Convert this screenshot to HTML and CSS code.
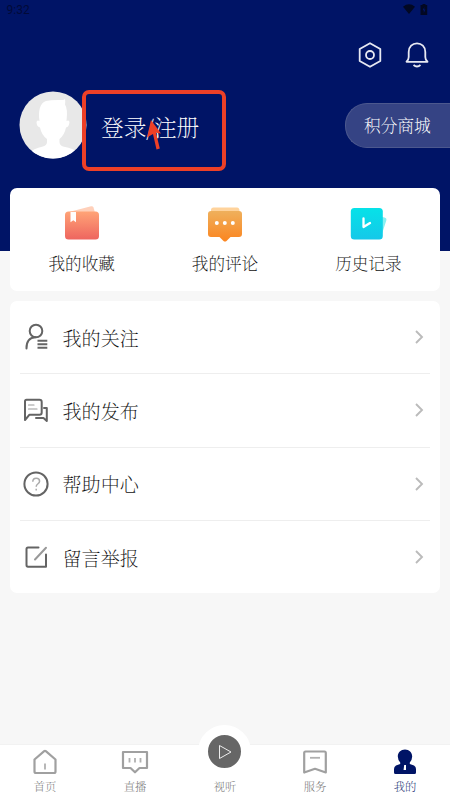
FILE: index.html
```html
<!DOCTYPE html>
<html lang="zh-CN">
<head>
<meta charset="utf-8">
<title>我的</title>
<link rel="stylesheet" href="styles.css">
</head>
<body>
<div class="screen">
  <header class="hero">
    <div class="status">
      <span>9:32</span>
      <div class="status-icons">
        <svg width="12" height="10" viewBox="0 0 12 10"><path d="M0 2.7Q6-2 12 2.7L6 10Z"/></svg>
        <svg width="8" height="11" viewBox="0 0 8 11"><path d="M2.5 0h3v1H7.2v10H.5V1h2Z"/><path d="M4.300 3 2.600 6.200h1.200V9L5.500 5.500H4.300Z" fill="#001466"/></svg>
      </div>
    </div>
    <div class="actions">
      <svg width="24" height="28" viewBox="0 0 24 28"><path d="M12 2.200 22.300 8v12L12 25.800 1.700 20V8Z"/><circle cx="12" cy="14" r="4"/></svg>
      <svg width="24" height="28" viewBox="0 0 24 28"><path d="M1.500 20.800H22.500C21 19.600 20.300 18 20.300 16V11C20.300 5.500 16.600 2.400 12 2.400S3.700 5.500 3.700 11V16C3.700 18 3 19.600 1.500 20.800Z"/><path d="M8.500 24Q12 27 15.500 24"/></svg>
    </div>
    <div class="account">
      <svg class="avatar" width="68" height="68" viewBox="0 0 68 68">
        <defs><clipPath id="face"><circle cx="34" cy="34" r="33.500"/></clipPath></defs>
        <circle cx="34" cy="34" r="33.500" fill="#e8e8e8"/>
        <path clip-path="url(#face)" fill="#fff" d="M20.500 30C19 20 21 12 27 10Q33 8.500 44 9Q46 8.500 46 7.500Q46.500 11 46 13.500Q49 18 47.500 30Q50 28.500 50.500 31Q50 36 47 36.500Q45.500 44 40.500 48V51Q40.500 54 44 55.500Q56 57.500 59 62V68H10V62Q14 57.500 24 55.500Q28 54 28 51V48Q22.500 44 21 36.500Q17.500 35.500 17.500 31Q18 28.500 20.500 30Z"/>
      </svg>
      <span class="login">登录/注册</span>
      <span class="mall">积分商城</span>
    </div>
  </header>

  <section class="card shortcuts">
    <div class="shortcut">
      <svg width="40" height="40" viewBox="0 0 40 40">
        <defs><linearGradient id="red" x2="0" y2="1"><stop stop-color="#ffa477"/><stop offset="1" stop-color="#ee655f"/></linearGradient></defs>
        <path d="M7 8 29 2.300Q31 2 31.500 3.500L34 12H7Z" fill="#ffd0ba"/>
        <rect x="3" y="7.500" width="34" height="28" rx="3.500" fill="url(#red)"/>
        <path d="M8.500 8H14V18.200L11.300 16.200 8.500 18.200Z" fill="#fff"/>
      </svg>
      <span>我的收藏</span>
    </div>
    <div class="shortcut">
      <svg width="40" height="40" viewBox="0 0 40 40">
        <defs><linearGradient id="orange" x2="0" y2="1"><stop stop-color="#efb05c"/><stop offset="1" stop-color="#fb8520"/></linearGradient></defs>
        <path d="M6 10V6Q6 3.500 8.500 3.500H32Q34.500 3.500 34.500 7V10Z" fill="#ffd39c"/>
        <path d="M3 10Q3 7 6 7H34Q37 7 37 10V30Q37 33 34 33H25.500L21.500 37Q20 38 18.500 37L14.500 33H6Q3 33 3 30Z" fill="url(#orange)"/>
        <g fill="#fff"><circle cx="11.800" cy="19" r="2"/><circle cx="19.800" cy="19" r="2"/><circle cx="27.800" cy="19" r="2"/></g>
      </svg>
      <span>我的评论</span>
    </div>
    <div class="shortcut">
      <svg width="40" height="40" viewBox="0 0 40 40">
        <defs><linearGradient id="cyan" x2="0" y2="1"><stop stop-color="#06e2e8"/><stop offset="1" stop-color="#15c8e9"/></linearGradient></defs>
        <path d="M30 12 36.500 13.500Q39 14 38.300 16.500L33 33Z" fill="#89f0f2"/>
        <rect x="2.800" y="4" width="32" height="31.500" rx="3.500" fill="url(#cyan)"/>
        <path d="M15.500 14.500V23L22 19" fill="none" stroke="#fff" stroke-width="2.300" stroke-linecap="round" stroke-linejoin="round"/>
      </svg>
      <span>历史记录</span>
    </div>
  </section>

  <section class="card menu">
    <div class="row">
      <svg class="glyph" width="26" height="28" viewBox="0 0 26 28"><circle cx="13" cy="8" r="6.300"/><path d="M3.500 25.500Q3.200 15 12.500 14.300"/><path class="lines" d="M14.500 17.800H24.300M14.500 21.300H24.300M14.500 24.800H24.300"/></svg>
      <span>我的关注</span>
      <svg class="chevron" width="10" height="14" viewBox="0 0 10 14"><path d="M2 1 8 7 2 13"/></svg>
    </div>
    <div class="row">
      <svg class="glyph" width="26" height="28" viewBox="0 0 26 28"><path d="M3.500 3.700H16.500Q18.700 3.700 18.700 5.900V16.500Q18.700 18.700 16.500 18.700H6.500L2 24V5.500Q2 3.700 3.500 3.700Z"/><path d="M21 12H23.800V25L20.500 22H13"/><path class="thin" d="M5.500 9H11M5.500 13H14"/></svg>
      <span>我的发布</span>
      <svg class="chevron" width="10" height="14" viewBox="0 0 10 14"><path d="M2 1 8 7 2 13"/></svg>
    </div>
    <div class="row">
      <svg class="glyph" width="26" height="28" viewBox="0 0 26 28"><circle cx="13" cy="14" r="11.600"/><path class="mark" d="M9.800 11.800Q9.800 8.300 13.200 8.300Q16.600 8.300 16.600 11.200Q16.600 12.500 14.700 14Q13.200 15 13.200 16.700M13.200 18.800V20.500"/></svg>
      <span>帮助中心</span>
      <svg class="chevron" width="10" height="14" viewBox="0 0 10 14"><path d="M2 1 8 7 2 13"/></svg>
    </div>
    <div class="row">
      <svg class="glyph" width="26" height="28" viewBox="0 0 26 28"><path d="M15.500 4.500H5Q3.500 4.500 3.500 6V22Q3.500 23.800 5 23.800H23V11.500"/><path class="pen" d="M23 4.800 12 16.500"/></svg>
      <span>留言举报</span>
      <svg class="chevron" width="10" height="14" viewBox="0 0 10 14"><path d="M2 1 8 7 2 13"/></svg>
    </div>
  </section>

  <nav class="tabs">
    <div class="tab">
      <svg width="28" height="28" viewBox="0 0 28 28"><path d="M3.500 11.500 13.200 3.200Q14 2.500 14.800 3.200L24.500 11.500V23.500Q24.500 25 23 25H5Q3.500 25 3.500 23.500Z"/><path class="fine" d="M14 15.500V21.500"/></svg>
      <span>首页</span>
    </div>
    <div class="tab">
      <svg width="28" height="28" viewBox="0 0 28 28"><path d="M2 4H26V20H18.500L14 24.300 9.500 20H2Z"/><path d="M8.500 10V14.500M14 10V14.500M19.500 10V14.500" class="fine"/></svg>
      <span>直播</span>
    </div>
    <div class="tab center">
      <div class="play"><svg width="16" height="16" viewBox="0 0 16 16"><path d="M2.500 1.500 14 8 2.500 14.500Z"/></svg></div>
      <span>视听</span>
    </div>
    <div class="tab">
      <svg width="28" height="28" viewBox="0 0 28 28"><path d="M4.500 3.500H23.500Q24.800 3.500 24.800 5V24.500L14 20.800 3.200 24.500V5Q3.200 3.500 4.500 3.500Z"/><path class="fine" d="M9 9.800H19"/></svg>
      <span>服务</span>
    </div>
    <div class="tab active">
      <svg width="28" height="28" viewBox="0 0 28 28"><path fill="#001466" stroke="none" d="M14 1.500C18.200 1.500 21.200 4.600 21.200 8.500Q21.200 11.500 18.800 14.500V16L23 17.500Q25 18.500 25 21V24.500Q25 26 23.500 26H4.500Q3 26 3 24.500V21Q3 18.500 5 17.500L9.200 16V14.500Q6.800 11.500 6.800 8.500C6.800 4.600 9.800 1.500 14 1.500Z"/><path fill="#fff" stroke="none" d="M13.200 17H15V22H12.600Z"/></svg>
      <span>我的</span>
    </div>
  </nav>

  <div class="highlight"></div>
  <svg class="pointer" width="16" height="32" viewBox="0 0 16 32"><path d="M5 1 15 14.500 10 13.800 13.800 29.500 10.500 30.500 7 15 1 18.500Z" fill="#ed4027"/></svg>
</div>
</body>
</html>
```

FILE: styles.css
```css
* { box-sizing: border-box; }

body {
  margin: 0;
  font-family: "Noto Serif CJK SC", "Noto Serif SC", "Noto Sans CJK SC", serif;
  font-weight: 200;
  color: #111;
}

svg { display: block; flex: none; }

.screen {
  position: relative;
  display: flex;
  flex-direction: column;
  width: 450px;
  height: 800px;
  overflow: hidden;
  background: #f7f7f7;
}

.hero {
  flex: none;
  height: 251.4px;
  background: #001466;
  color: #fff;
}

.status {
  display: flex;
  justify-content: space-between;
  align-items: center;
  height: 20px;
  padding: 0 22px 0 6.5px;
  color: #020a38;
  font: 400 12px/20px Roboto, sans-serif;
}

.status-icons { display: flex; align-items: center; gap: 5px; margin-top: -2px; }
.status-icons svg { fill: #020822; }

.actions {
  display: flex;
  justify-content: flex-end;
  gap: 23px;
  padding: 21px 21px 0 0;
}

.actions svg { fill: none; stroke: #e7e9f2; stroke-width: 1.8; stroke-linejoin: round; }
.actions svg:first-child { margin-right: .5px; }

.account {
  display: flex;
  align-items: center;
  height: 68px;
  margin-top: 22px;
  padding-left: 19px;
}

.login { margin: 2px 0 0 14px; font-size: 22.7px; line-height: 32px; white-space: nowrap; }

.mall {
  width: 105px;
  height: 45px;
  margin-left: auto;
  padding-left: 18px;
  border: 1px solid #4c588e;
  border-right: 0;
  border-radius: 22px 0 0 22px;
  background: #354384;
  font-size: 16.7px;
  line-height: 43px;
}

.card {
  flex: none;
  width: 430px;
  margin: 0 10px;
  border-radius: 7px;
  background: #fff;
}

.shortcuts {
  display: flex;
  height: 102.6px;
  margin-top: -63px;
}

.shortcut {
  display: flex;
  flex: 1;
  flex-direction: column;
  align-items: center;
  padding-top: 15.6px;
  font-size: 16.6px;
  line-height: 24px;
}

.shortcut span { margin-top: 7px; }

.menu { height: 292.4px; margin-top: 10px; padding: 0 10px; }

.row {
  display: flex;
  align-items: center;
  height: 73.3px;
  padding: 0 6.5px 0 3px;
  border-bottom: 1px solid #eee;
  font-size: 19.1px;
  line-height: 28px;
}

.row:last-child { height: 72.5px; border-bottom: 0; }
.row span { flex: 1; margin: 1px 0 0 13.5px; }

.glyph { fill: none; stroke: #646464; stroke-width: 2; stroke-linecap: round; stroke-linejoin: round; }
.glyph .lines { stroke-linecap: butt; }
.glyph .thin { stroke: #999; stroke-width: 1.2; }
.glyph .mark { stroke: #aaa; stroke-width: 1.5; stroke-linecap: butt; }
.glyph .pen { stroke: #999; }

.chevron { fill: none; stroke: #bbb; stroke-width: 1.9; }

.tabs {
  display: flex;
  height: 56px;
  margin-top: auto;
  border-top: 1px solid #f2f2f2;
  background: #fff;
}

.tab {
  display: flex;
  flex: 1;
  flex-direction: column;
  align-items: center;
  padding-top: 3px;
  color: #666;
  font-size: 11.3px;
  line-height: 16px;
}

.tab span { margin-top: 2px; }
.tab > svg { fill: none; stroke: #a0a0a0; stroke-width: 2.2; stroke-linejoin: round; }
.tab > svg .fine { stroke-width: 1.8; stroke: #b0b0b0; }
.tab.active { color: #001466; }

.tab.center { padding-top: 0; }

.play {
  display: flex;
  align-items: center;
  justify-content: center;
  width: 53px;
  height: 53px;
  margin: -20px 1px 0 0;
  border: 10px solid #fff;
  border-radius: 50%;
  background: #666;
}

.play svg { fill: none; stroke: #eee; stroke-width: 1; }
.tab.center span { margin-top: 0; }

.highlight {
  position: absolute;
  left: 82px;
  top: 90px;
  width: 144px;
  height: 81px;
  border: 4px solid #ed4027;
  border-radius: 7px;
}

.pointer { position: absolute; left: 146px; top: 119px; }
```
